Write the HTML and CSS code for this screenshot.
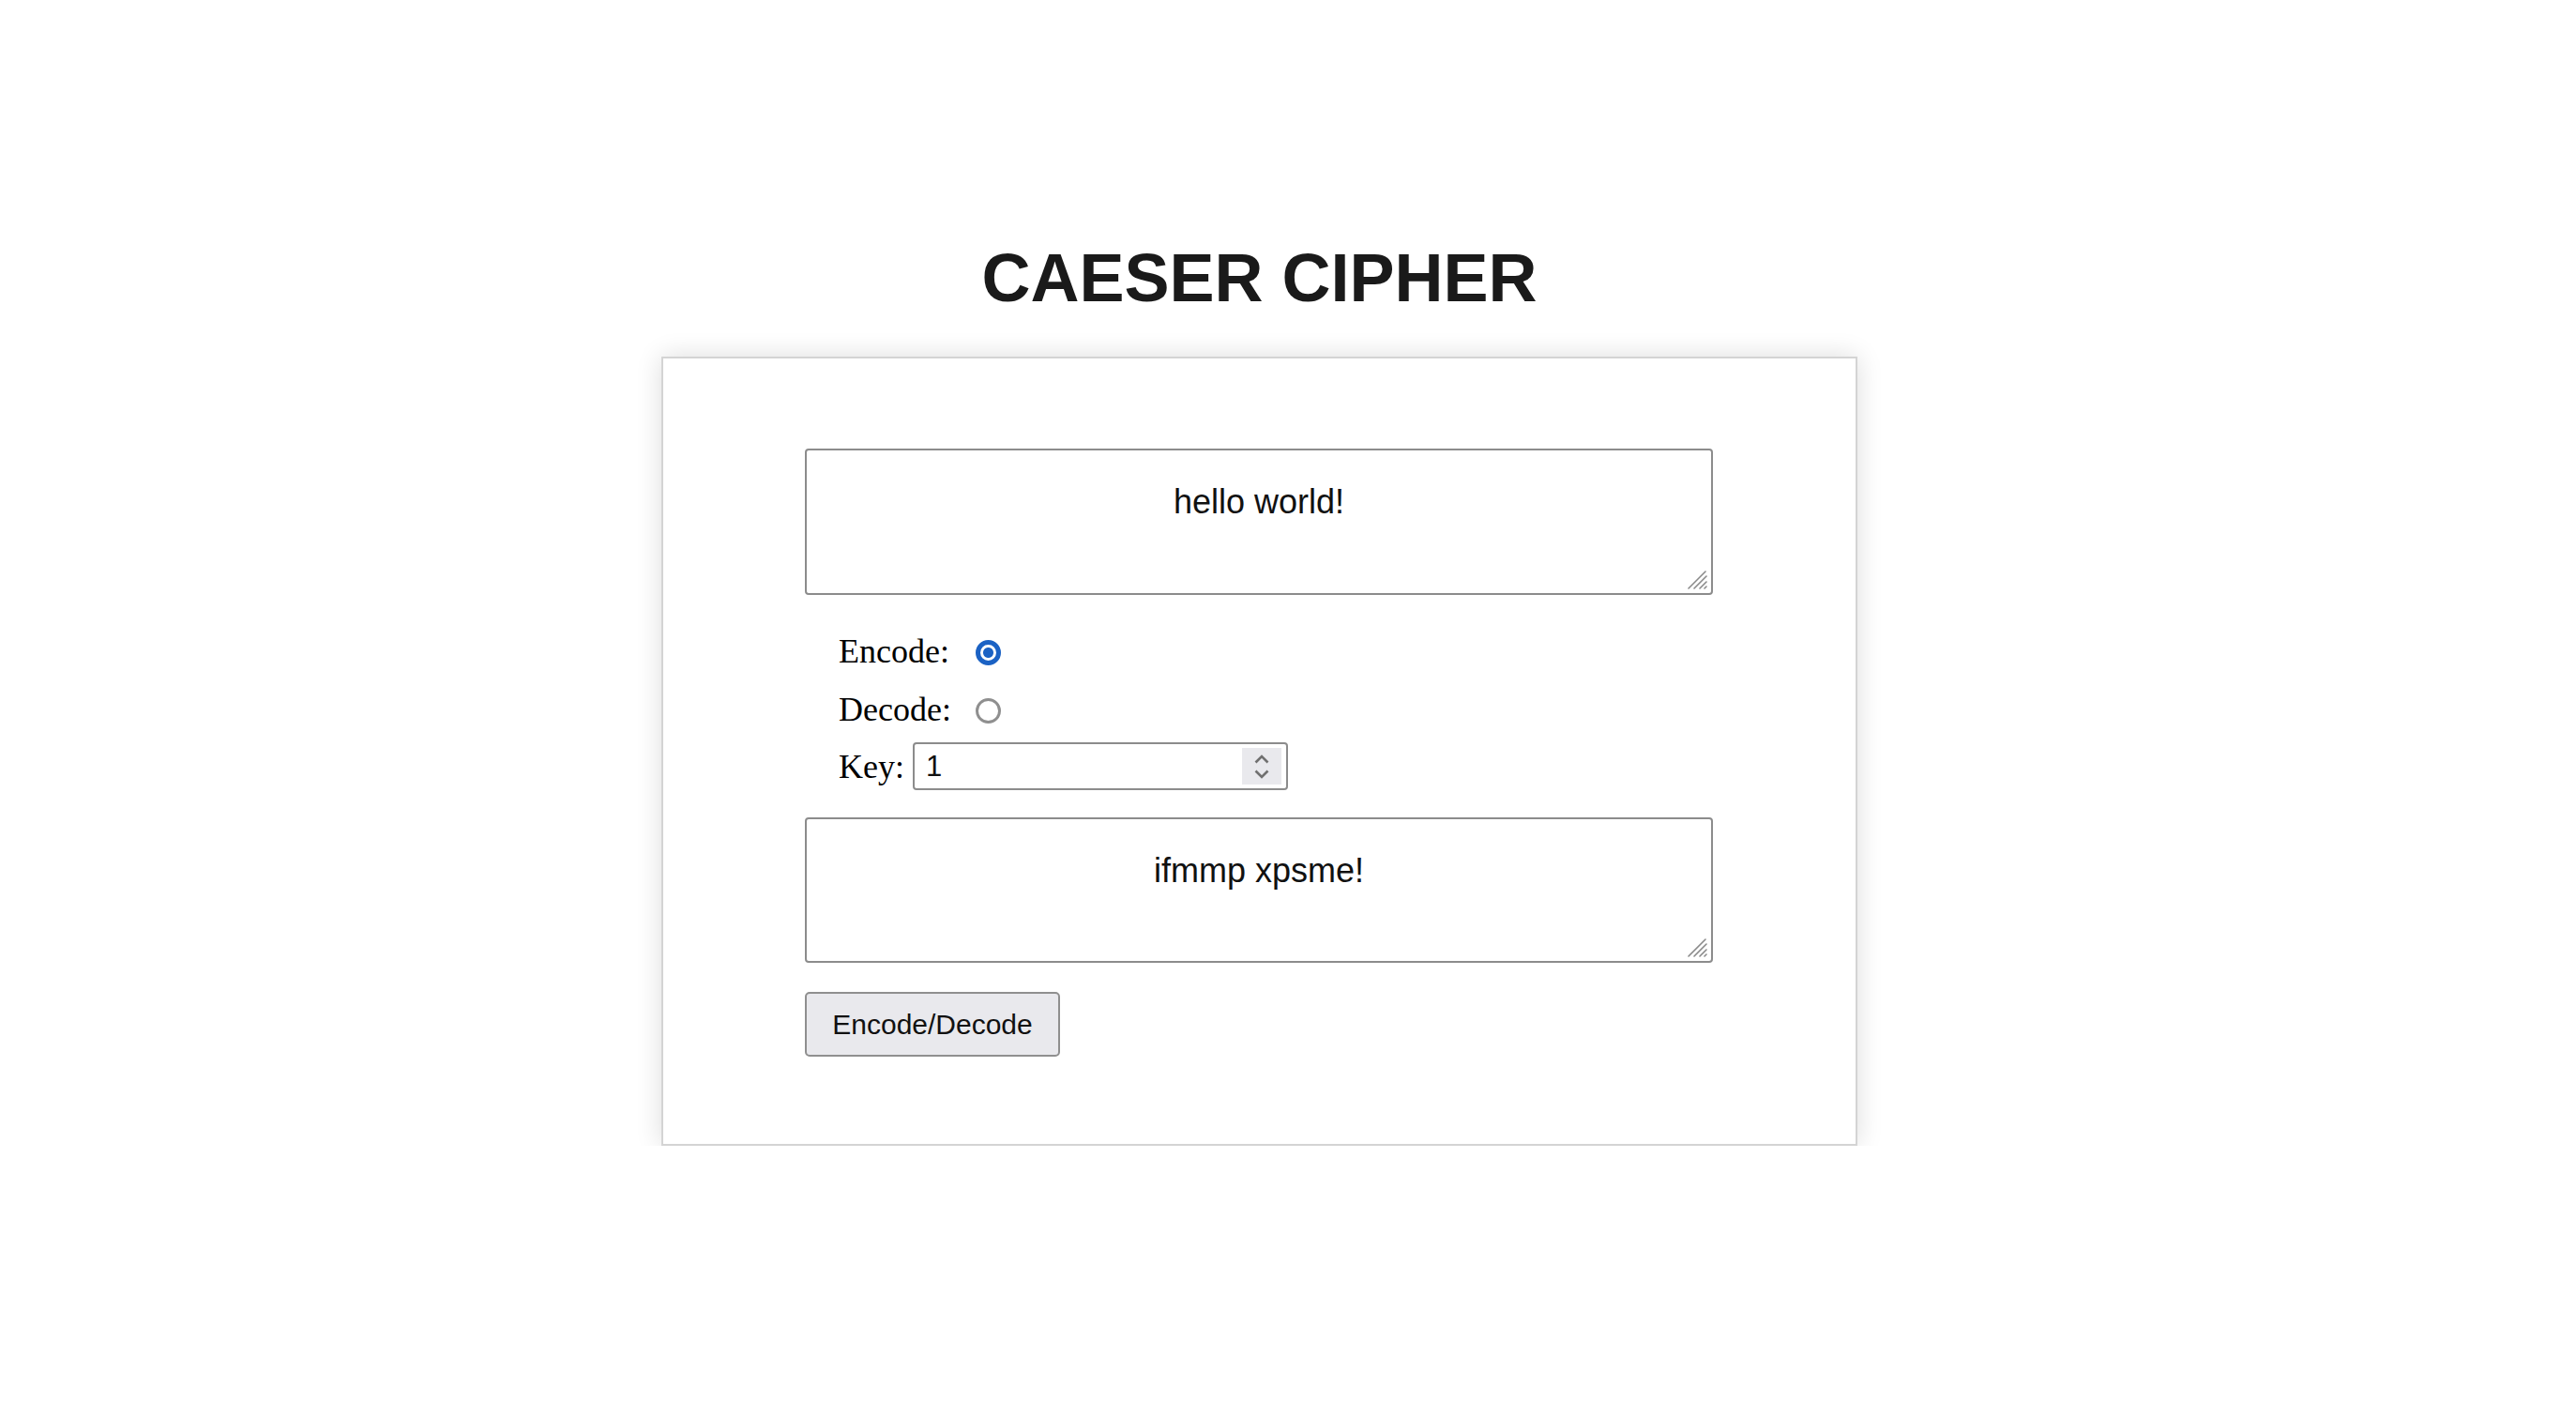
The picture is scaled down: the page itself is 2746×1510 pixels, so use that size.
FILE: index.html
```html
<!DOCTYPE html>
<html lang="en">
<head>
<meta charset="utf-8">
<title>Caeser Cipher</title>
<link rel="stylesheet" href="styles.css">
</head>
<body>
<div class="page">
  <h1 class="title">CAESER CIPHER</h1>
  <div class="card">
    <div class="ta-wrap">
      <textarea class="ta" spellcheck="false">hello world!</textarea>
      <svg class="grip" width="26" height="22" viewBox="0 0 26 22"><g stroke="#8a8a8a" stroke-width="1.6" stroke-linecap="round"><line x1="4" y1="20" x2="22" y2="2"/><line x1="10" y1="20" x2="23" y2="7"/><line x1="16" y1="20" x2="23" y2="13"/><line x1="21" y1="20" x2="23" y2="18"/></g></svg>
    </div>
    <div class="row row-first">
      <span class="opt-label">Encode:</span>
      <span class="radio checked"></span>
    </div>
    <div class="row row-second">
      <span class="opt-label">Decode:</span>
      <span class="radio"></span>
    </div>
    <div class="row row-key">
      <span class="key-label">Key:</span>
      <span class="num-wrap">
        <input class="num" type="text" value="1">
        <span class="spin">
          <svg width="18" height="10" viewBox="0 0 18 10"><polyline points="2.5,8.5 9,2 15.5,8.5" fill="none" stroke="#707070" stroke-width="2.6"/></svg>
          <svg width="18" height="10" viewBox="0 0 18 10"><polyline points="2.5,1.5 9,8 15.5,1.5" fill="none" stroke="#707070" stroke-width="2.6"/></svg>
        </span>
      </span>
    </div>
    <div class="ta-wrap ta-out">
      <textarea class="ta ta2" spellcheck="false">ifmmp xpsme!</textarea>
      <svg class="grip" width="26" height="22" viewBox="0 0 26 22"><g stroke="#8a8a8a" stroke-width="1.6" stroke-linecap="round"><line x1="4" y1="20" x2="22" y2="2"/><line x1="10" y1="20" x2="23" y2="7"/><line x1="16" y1="20" x2="23" y2="13"/><line x1="21" y1="20" x2="23" y2="18"/></g></svg>
    </div>
    <div class="actions">
      <button class="btn" type="button">Encode/Decode</button>
    </div>
  </div>
</div>
</body>
</html>
```

FILE: styles.css
```css
html, body {
  margin: 0;
  padding: 0;
  background: #ffffff;
}

body {
  font-family: "Liberation Serif", "Times New Roman", serif;
  color: #000;
}

.page {
  width: 1275px;
  margin-left: 705px;
}

.title {
  margin: 255px 0 42px;
  font-family: "Liberation Sans", Arial, sans-serif;
  font-weight: bold;
  font-size: 72px;
  line-height: 83px;
  text-align: center;
  color: #1a1a1a;
}

.card {
  box-sizing: border-box;
  width: 1275px;
  height: 841px;
  border: 2px solid #d4d4d4;
  box-shadow: 0 0 26px rgba(0, 0, 0, 0.14);
  padding: 96px 0 93px 151px;
  display: flex;
  flex-direction: column;
  align-items: flex-start;
}

.ta-wrap {
  position: relative;
  width: 968px;
  height: 156px;
}

.ta-out {
  margin-top: 29px;
  height: 155px;
}

.ta {
  box-sizing: border-box;
  display: block;
  width: 100%;
  height: 100%;
  margin: 0;
  border: 2px solid #8c8c8c;
  border-radius: 4px;
  padding: 34px 10px;
  font-family: "Liberation Sans", Arial, sans-serif;
  font-size: 36px;
  line-height: 41px;
  text-align: center;
  color: #111;
  resize: none;
  outline: none;
  overflow: hidden;
  background: #fff;
}

.grip {
  position: absolute;
  right: 4px;
  bottom: 5px;
}

.row {
  display: flex;
  align-items: center;
  height: 42px;
  padding-left: 36px;
  font-size: 36px;
  line-height: 42px;
}

.row-first {
  margin-top: 39px;
}

.row-second {
  margin-top: 20px;
}

.row-key {
  margin-top: 14px;
  height: 51px;
}

.opt-label {
  width: 146px;
}

.radio {
  box-sizing: border-box;
  width: 27px;
  height: 27px;
  margin-top: 3px;
  margin-left: 0;
  border-radius: 50%;
  border: 3.5px solid #8f8f8f;
  background: #fff;
}

.radio.checked {
  border: 5px solid #1b62c4;
  background: radial-gradient(circle, #1b62c4 0 5px, #fff 6px);
}

.key-label {
  width: 79px;
}

.num-wrap {
  position: relative;
  display: block;
}

.num {
  box-sizing: border-box;
  display: block;
  width: 400px;
  height: 51px;
  margin: 0;
  border: 2px solid #8c8c8c;
  border-radius: 4px;
  padding: 0 60px 0 12px;
  font-family: "Liberation Sans", Arial, sans-serif;
  font-size: 31px;
  color: #111;
  outline: none;
  background: #fff;
}

.spin {
  position: absolute;
  right: 7px;
  top: 6px;
  width: 42px;
  height: 39px;
  background: #e9e9ed;
  display: flex;
  flex-direction: column;
  align-items: center;
  justify-content: center;
  gap: 6px;
}

.spin svg {
  display: block;
}

.actions {
  margin-top: 31px;
}

.btn {
  box-sizing: border-box;
  width: 272px;
  height: 69px;
  margin: 0;
  padding: 0;
  border: 2px solid #8f8f8f;
  border-radius: 5px;
  background: #e9e9ed;
  font-family: "Liberation Sans", Arial, sans-serif;
  font-size: 30px;
  color: #111;
}
```
